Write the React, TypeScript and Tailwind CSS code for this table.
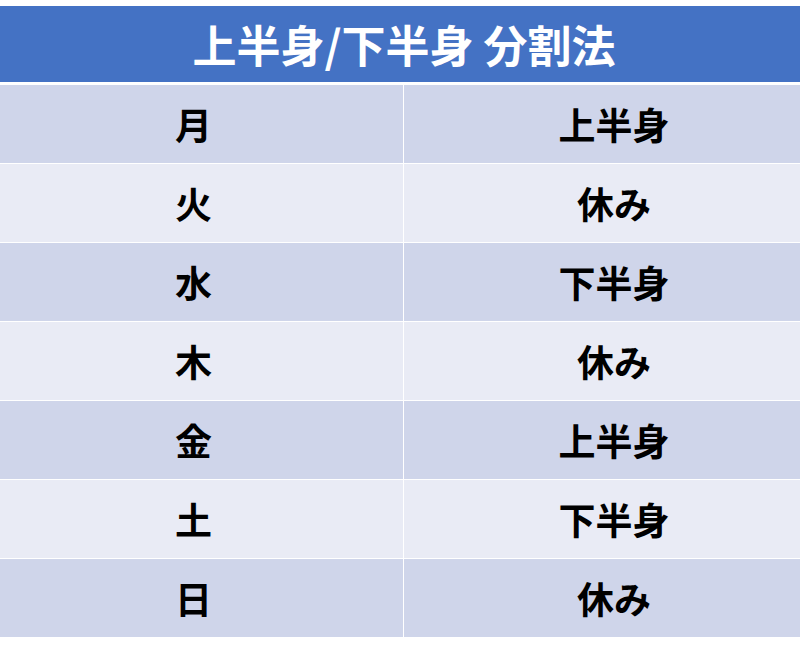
const rows: [string, string][] = [
  ['月', '上半身'],
  ['火', '休み'],
  ['水', '下半身'],
  ['木', '休み'],
  ['金', '上半身'],
  ['土', '下半身'],
  ['日', '休み'],
]

export default function App() {
  return (
    <div
      className="w-[800px] h-[648px] bg-white overflow-hidden pt-[6px]"
      style={{ fontFamily: '"Noto Sans CJK JP", "Noto Sans", sans-serif' }}
    >
      <div className="w-[840px] -ml-[16px] flex flex-col">
        <div className="h-[76px] bg-[#4472C4] flex items-center justify-center text-white font-bold text-[44px] leading-none">
          上半身/下半身 分割法
        </div>
        <div className="h-[3px] bg-white" />
        {rows.map(([day, part], i) => (
          <div
            key={day}
            className={`grid grid-cols-2 h-[79px] border-b border-white ${i % 2 === 0 ? 'bg-[#CFD5EA]' : 'bg-[#E9EBF5]'}`}
          >
            <div className="flex items-center justify-center border-r border-white text-black font-bold text-[37px] leading-none">
              {day}
            </div>
            <div className="flex items-center justify-center text-black font-bold text-[37px] leading-none">
              {part}
            </div>
          </div>
        ))}
      </div>
    </div>
  )
}
